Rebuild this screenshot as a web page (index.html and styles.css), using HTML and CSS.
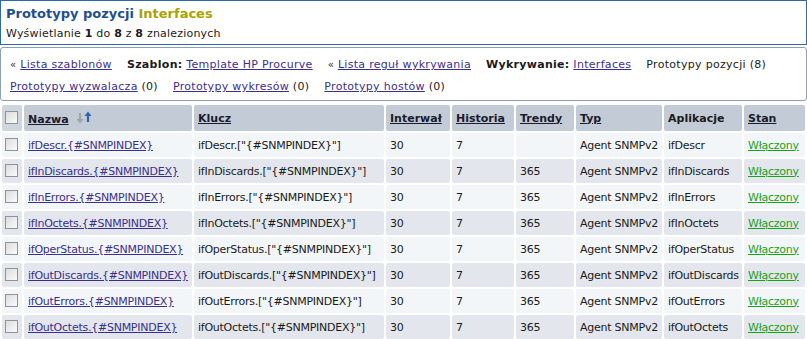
FILE: index.html
```html
<!DOCTYPE html>
<html lang="pl">

<head>
  <meta charset="UTF-8">
  <title>Prototypy pozycji</title>
  <link rel="stylesheet" href="styles.css">
</head>

<body>
  <div class="header">
    <h1>Prototypy pozycji <span class="host">Interfaces</span></h1>
    <div class="count">Wyświetlanie <b>1</b> do <b>8</b> z <b>8</b> znalezionych</div>
  </div>

  <div class="nav">
    <div class="nav-row">
      <span class="item"><span class="raquo">&laquo;</span> <a href="#">Lista szablonów</a></span>
      <span class="item"><b>Szablon:</b> <a href="#">Template HP Procurve</a></span>
      <span class="item"><span class="raquo">&laquo;</span> <a href="#">Lista reguł wykrywania</a></span>
      <span class="item"><b>Wykrywanie:</b> <a href="#">Interfaces</a></span>
      <span class="item">Prototypy pozycji (8)</span>
    </div>
    <div class="nav-row">
      <span class="item"><a href="#">Prototypy wyzwalacza</a> (0)</span>
      <span class="item"><a href="#">Prototypy wykresów</a> (0)</span>
      <span class="item"><a href="#">Prototypy hostów</a> (0)</span>
    </div>
  </div>

  <table class="list">
    <colgroup>
      <col class="w-check">
      <col class="w-name">
      <col class="w-key">
      <col class="w-int">
      <col class="w-hist">
      <col class="w-trend">
      <col class="w-type">
      <col class="w-app">
      <col>
    </colgroup>
    <thead>
      <tr>
        <th class="check"><span class="box"></span></th>
        <th><a href="#">Nazwa</a>
          <svg class="sort" width="16" height="14" viewBox="0 0 16 14">
            <path d="M4 2v7" stroke="#a3a3a3" stroke-width="2.2"/>
            <path d="M0.5 8h7l-3.5 4.5z" fill="#a3a3a3"/>
            <path d="M12 4v7" stroke="#2f65ae" stroke-width="2.2"/>
            <path d="M8.5 5h7l-3.5-4.5z" fill="#2f65ae"/>
          </svg>
        </th>
        <th><a href="#">Klucz</a></th>
        <th><a href="#">Interwał</a></th>
        <th><a href="#">Historia</a></th>
        <th><a href="#">Trendy</a></th>
        <th><a href="#">Typ</a></th>
        <th>Aplikacje</th>
        <th><a href="#">Stan</a></th>
      </tr>
    </thead>
    <tbody>
      <tr class="odd">
        <td class="check"><span class="box"></span></td>
        <td><a href="#">ifDescr.{#SNMPINDEX}</a></td>
        <td>ifDescr.["{#SNMPINDEX}"]</td>
        <td>30</td><td>7</td><td></td>
        <td>Agent SNMPv2</td><td>ifDescr</td>
        <td><a class="on" href="#">Włączony</a></td>
      </tr>
      <tr class="even">
        <td class="check"><span class="box"></span></td>
        <td><a href="#">ifInDiscards.{#SNMPINDEX}</a></td>
        <td>ifInDiscards.["{#SNMPINDEX}"]</td>
        <td>30</td><td>7</td><td>365</td>
        <td>Agent SNMPv2</td><td>ifInDiscards</td>
        <td><a class="on" href="#">Włączony</a></td>
      </tr>
      <tr class="odd">
        <td class="check"><span class="box"></span></td>
        <td><a href="#">ifInErrors.{#SNMPINDEX}</a></td>
        <td>ifInErrors.["{#SNMPINDEX}"]</td>
        <td>30</td><td>7</td><td>365</td>
        <td>Agent SNMPv2</td><td>ifInErrors</td>
        <td><a class="on" href="#">Włączony</a></td>
      </tr>
      <tr class="even">
        <td class="check"><span class="box"></span></td>
        <td><a href="#">ifInOctets.{#SNMPINDEX}</a></td>
        <td>ifInOctets.["{#SNMPINDEX}"]</td>
        <td>30</td><td>7</td><td>365</td>
        <td>Agent SNMPv2</td><td>ifInOctets</td>
        <td><a class="on" href="#">Włączony</a></td>
      </tr>
      <tr class="odd">
        <td class="check"><span class="box"></span></td>
        <td><a href="#">ifOperStatus.{#SNMPINDEX}</a></td>
        <td>ifOperStatus.["{#SNMPINDEX}"]</td>
        <td>30</td><td>7</td><td>365</td>
        <td>Agent SNMPv2</td><td>ifOperStatus</td>
        <td><a class="on" href="#">Włączony</a></td>
      </tr>
      <tr class="even">
        <td class="check"><span class="box"></span></td>
        <td><a href="#">ifOutDiscards.{#SNMPINDEX}</a></td>
        <td>ifOutDiscards.["{#SNMPINDEX}"]</td>
        <td>30</td><td>7</td><td>365</td>
        <td>Agent SNMPv2</td><td>ifOutDiscards</td>
        <td><a class="on" href="#">Włączony</a></td>
      </tr>
      <tr class="odd">
        <td class="check"><span class="box"></span></td>
        <td><a href="#">ifOutErrors.{#SNMPINDEX}</a></td>
        <td>ifOutErrors.["{#SNMPINDEX}"]</td>
        <td>30</td><td>7</td><td>365</td>
        <td>Agent SNMPv2</td><td>ifOutErrors</td>
        <td><a class="on" href="#">Włączony</a></td>
      </tr>
      <tr class="even">
        <td class="check"><span class="box"></span></td>
        <td><a href="#">ifOutOctets.{#SNMPINDEX}</a></td>
        <td>ifOutOctets.["{#SNMPINDEX}"]</td>
        <td>30</td><td>7</td><td>365</td>
        <td>Agent SNMPv2</td><td>ifOutOctets</td>
        <td><a class="on" href="#">Włączony</a></td>
      </tr>
    </tbody>
  </table>
</body>

</html>
```

FILE: styles.css
```css
body {
  margin: 0;
  background-color: #fff;
  font-family: "DejaVu Sans", Verdana, sans-serif;
  font-size: 11px;
  color: #1a1a1a;
}

a {
  color: #3b2f8c;
  text-decoration: underline;
}

.header {
  border: 1px solid #2f6aa6;
  padding: 3px 5px 5px 5px;
  height: 35px;
}

h1 {
  margin: 0;
  font-size: 13px;
  font-weight: bold;
  color: #1e4f8f;
  line-height: 20px;
}

h1 .host {
  color: #a9a400;
}

.count {
  margin-top: 3px;
  line-height: 14px;
  letter-spacing: 0.2px;
}

.nav {
  margin-top: 2px;
  border: 1px solid #8d9fb4;
  border-radius: 3px;
  padding: 6px 0 2px 9px;
  letter-spacing: 0.3px;
}

.nav-row {
  display: flex;
  gap: 15px;
  line-height: 22px;
}

.raquo {
  font-size: 10px;
  color: #333;
}

.list {
  margin-top: 2px;
  width: 100%;
  border-spacing: 2px;
  table-layout: fixed;
  font-size: 11px;
}

.w-check { width: 20px; }
.w-name { width: 168px; }
.w-key { width: 190px; }
.w-int { width: 64px; }
.w-hist { width: 62px; }
.w-trend { width: 58px; }
.w-type { width: 86px; }
.w-app { width: 78px; }

.list th,
.list td {
  text-align: left;
  padding: 0 4px;
  white-space: nowrap;
  overflow: hidden;
  border-radius: 2px;
}

.list th {
  height: 26px;
  background-color: #c3ccd6;
  font-weight: bold;
}

.list th a {
  color: #1b1b2e;
}

.list td {
  height: 24px;
  letter-spacing: -0.25px;
}

.list tr.odd td {
  background-color: #f2f6f8;
}

.list tr.even td {
  background-color: #e3e7ed;
}

.list .check {
  padding: 0 3px;
}

.list th.check {
  background-color: #d0d6dd;
}

.box {
  display: block;
  width: 11px;
  height: 11px;
  border: 1px solid #8f9499;
  background: linear-gradient(135deg, #dcdcdc, #fbfbfb);
  margin-top: -2px;
}

.sort {
  vertical-align: -2px;
  margin-left: 4px;
}

a.on {
  color: #1aa11a;
}
```
